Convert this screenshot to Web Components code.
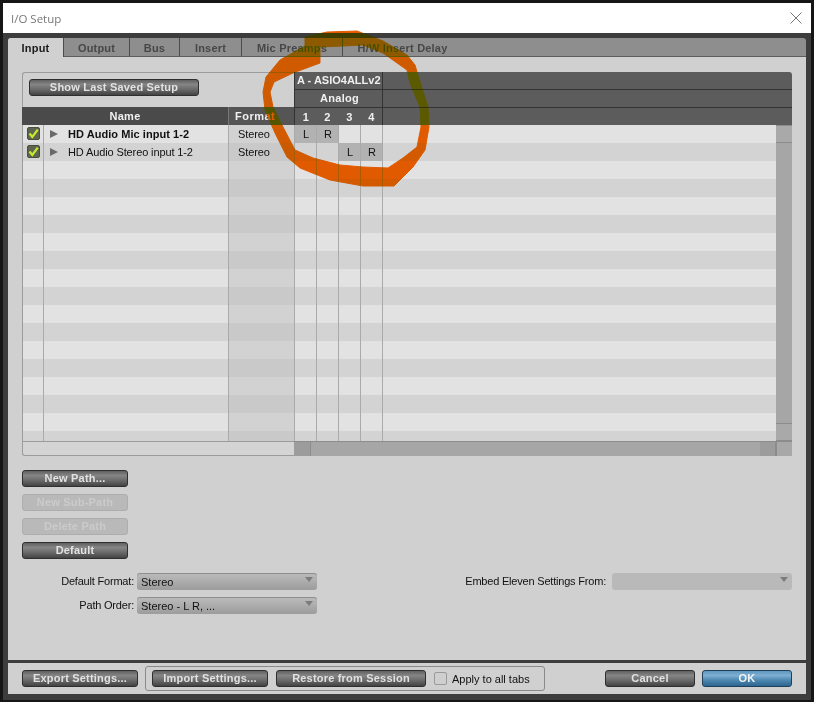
<!DOCTYPE html>
<html>
<head>
<meta charset="utf-8">
<title>I/O Setup</title>
<style>
  html, body { margin: 0; height: 100%; overflow: hidden; }
  body { background: #161616; padding: 3px 3px 2px 3px; box-sizing: border-box; font-family: "Liberation Sans", Arial, sans-serif; }
</style>
</head>
<body>
<io-window>
  <io-tabs slot="tabs"></io-tabs>
  <io-table></io-table>
  <div slot="buttons">
    <io-button wide>New Path...</io-button>
    <io-button wide disabled>New Sub-Path</io-button>
    <io-button wide disabled>Delete Path</io-button>
    <io-button wide>Default</io-button>
  </div>
  <io-settings slot="settings"></io-settings>
  <io-footer slot="footer"></io-footer>
</io-window>
<io-scribble></io-scribble>

<script>
class IoButton extends HTMLElement {
  constructor() {
    super();
    this.attachShadow({ mode: "open" });
    this.shadowRoot.innerHTML = `
      <style>
        :host {
          display: block;
          box-sizing: border-box;
          height: 17px;
          border: 1px solid #2f2f2f;
          border-radius: 3px;
          background: linear-gradient(#606060 0, #858585 30%, #6c6c6c 60%, #434343 100%);
          color: #e2e2e2;
          font: bold 11px/15px "Liberation Sans", Arial, sans-serif;
          letter-spacing: 0.2px;
          text-align: center;
          white-space: nowrap;
        }
        :host([wide]) { width: 106px; }
        :host([disabled]) {
          background: #b9b9b9;
          border-color: #adadad;
          color: #cbcbcb;
        }
        :host([primary]) {
          background: linear-gradient(#5f97bf 0, #7eafd2 30%, #4f89b2 60%, #2c6690 100%);
          border-color: #1f4058;
          color: #f0f4f7;
        }
      </style>
      <slot></slot>
    `;
  }
}

class IoCheck extends HTMLElement {
  constructor() {
    super();
    this.attachShadow({ mode: "open" });
    const checked = this.hasAttribute("checked");
    this.shadowRoot.innerHTML = `
      <style>
        :host {
          display: block;
          box-sizing: border-box;
          width: 13px;
          height: 13px;
          border-radius: 2px;
          border: 1px solid ${checked ? "#4a4f3c" : "#9a9a9a"};
          background: ${checked ? "#5e6450" : "#cfcfcf"};
        }
        svg { display: block; width: 11px; height: 11px; }
      </style>
      ${checked ? `<svg viewBox="0 0 11 11"><path d="M1.5 5.5 L4.3 9 L9.8 1.6" fill="none" stroke="#c4ec2c" stroke-width="2.2"/></svg>` : ""}
    `;
  }
}

class IoSelect extends HTMLElement {
  constructor() {
    super();
    this.attachShadow({ mode: "open" });
    this.shadowRoot.innerHTML = `
      <style>
        :host {
          display: flex;
          align-items: center;
          justify-content: space-between;
          box-sizing: border-box;
          width: 180px;
          height: 17px;
          padding: 0 4px;
          border-radius: 3px;
          background: linear-gradient(#bcbcbc, #9c9c9c);
          box-shadow: inset 0 1px 0 #8e8e8e;
          color: #111;
          font: 11px "Liberation Sans", Arial, sans-serif;
        }
        :host([disabled]) { background: #b9b9b9; box-shadow: none; }
        i {
          width: 0;
          height: 0;
          margin-bottom: 4px;
          border: 4px solid transparent;
          border-top: 5px solid #7c7c7c;
          border-bottom: 0;
        }
      </style>
      <span><slot></slot></span><i></i>
    `;
  }
}

class IoTabs extends HTMLElement {
  constructor() {
    super();
    this.attachShadow({ mode: "open" });
    const tabs = [["Input", 56], ["Output", 66], ["Bus", 50], ["Insert", 62], ["Mic Preamps", 101], ["H/W Insert Delay", 119]];
    const items = tabs
      .map(([name, width], index) => `<span class="${index === 0 ? "active" : ""}" style="width:${width}px">${name}</span>`)
      .join("");
    this.shadowRoot.innerHTML = `
      <style>
        :host {
          display: flex;
          box-sizing: border-box;
          height: 19px;
          background: #8e8e8e;
          border-radius: 3px 3px 0 0;
          border-bottom: 1px solid #5c5c5c;
          font: bold 11px/20px "Liberation Sans", Arial, sans-serif;
          letter-spacing: 0.2px;
          color: #474747;
        }
        span {
          box-sizing: border-box;
          text-align: center;
          border-right: 1px solid #4c4c4c;
          white-space: nowrap;
        }
        span:last-child { border-right: 0; }
        .active {
          background: #d0d0d0;
          color: #1a1a1a;
          height: 19px;
          border-radius: 3px 0 0 0;
        }
      </style>
      ${items}
    `;
  }
}

class IoTable extends HTMLElement {
  constructor() {
    super();
    this.attachShadow({ mode: "open" });
    const paths = [
      { name: "HD Audio Mic input 1-2", bold: true, cells: ["L", "R", "", ""] },
      { name: "HD Audio Stereo input 1-2", cells: ["", "", "L", "R"] }
    ];
    const rows = [];
    for (let i = 0; i < 18; i++) {
      const path = paths[i];
      const cells = [0, 1, 2, 3]
        .map((c) => {
          const text = path ? path.cells[c] : "";
          return `<div class="ch ${text ? "on" : ""}">${text}</div>`;
        })
        .join("");
      rows.push(`
        <div class="row ${i % 2 ? "odd" : ""}">
          <div class="check">${path ? "<io-check checked></io-check>" : ""}</div>
          <div class="name ${path && path.bold ? "bold" : ""}">${path ? `<b class="tri"></b>${path.name}` : ""}</div>
          <div class="format">${path ? "Stereo" : ""}</div>
          ${cells}
          <div class="rest"></div>
        </div>`);
    }
    this.shadowRoot.innerHTML = `
      <style>
        :host {
          display: grid;
          grid-template-rows: 35px 18px 316px 15px;
          grid-template-columns: 272px 1fr;
          height: 384px;
          font: 11px "Liberation Sans", Arial, sans-serif;
          color: #111;
        }
        .top {
          box-sizing: border-box;
          border: 1px solid #9c9c9c;
          border-bottom: 0;
          border-right: 0;
          border-radius: 3px 0 0 0;
          padding: 6px 0 0 6px;
        }
        .top io-button { width: 170px; }
        .bands {
          grid-column: 2;
          grid-row: 1 / 3;
          display: grid;
          grid-template-rows: 18px 18px 17px;
          background: #5c5c5c;
          border-radius: 0 3px 0 0;
          color: #f0f0f0;
          font-weight: bold;
          letter-spacing: 0.3px;
        }
        .band {
          display: grid;
          grid-template-columns: 88px 1fr;
          border-bottom: 1px solid #333;
          line-height: 17px;
          white-space: nowrap;
        }
        .band > div { border-left: 1px solid #333; }
        .band > div:first-child { padding-left: 2px; letter-spacing: 0; }
        .band.center > div:first-child { text-align: center; letter-spacing: 0.3px; }
        .nums { display: grid; grid-template-columns: repeat(4, 22px) 1fr; line-height: 19px; }
        .nums div { text-align: center; padding-left: 1px; }
        .nums div:first-child, .nums div:last-child { border-left: 1px solid #333; }
        .head {
          display: grid;
          grid-template-columns: 206px 66px;
          background: #4a4a4a;
          color: #f0f0f0;
          font-weight: bold;
          letter-spacing: 0.3px;
          line-height: 18px;
          text-align: center;
        }
        .head div:last-child { background: #555; border-left: 1px solid #777; text-align: left; padding-left: 6px; letter-spacing: 0.5px; }
        .body {
          grid-column: 1 / 3;
          display: grid;
          grid-template-columns: 1fr 16px;
          overflow: hidden;
        }
        .rows { overflow: hidden; height: 316px; letter-spacing: -0.12px; }
        .row {
          display: grid;
          grid-template-columns: 21px 185px 66px repeat(4, 22px) 1fr;
          height: 18px;
          background: #e2e2e2;
        }
        .row.odd { background: #d3d3d3; }
        .row > div { box-sizing: border-box; border-left: 1px solid #aaa; line-height: 18px; }
        .row > div:first-child { border-left: 1px solid #9c9c9c; }
        .check { padding: 2px 0 0 4px; }
        .name { display: flex; align-items: center; }
        .bold { font-weight: bold; letter-spacing: 0.05px; }
        .tri {
          width: 0;
          height: 0;
          margin: 0 10px 0 6px;
          border-left: 8px solid #6a6a6a;
          border-top: 4px solid transparent;
          border-bottom: 4px solid transparent;
        }
        .row .format { background: #d2d2d2; padding-left: 9px; }
        .row.odd .format { background: #c9c9c9; }
        .ch { text-align: center; padding-left: 1px; }
        .ch.on { background: #b2b2b2; }
        .vbar { display: grid; grid-template-rows: 18px 1fr 18px; background: #a6a6a6; }
        .vbar i { background: #a9a9a9; border-top: 1px solid #8c8c8c; border-bottom: 1px solid #8c8c8c; }
        .hleft {
          box-sizing: border-box;
          border: 1px solid #9c9c9c;
          border-right: 0;
          border-radius: 0 0 0 3px;
          background: #d4d4d4;
        }
        .hbar { display: grid; grid-template-columns: 17px 1fr 16px 16px; background: #a6a6a6; border-top: 1px solid #8c8c8c; }
        .hbar i { background: #9c9c9c; border-right: 1px solid #8c8c8c; }
        .hbar i:last-child { background: #a8a8a8; border-right: 0; border-left: 1px solid #8c8c8c; }
      </style>
      <div class="top"><io-button>Show Last Saved Setup</io-button></div>
      <div class="bands">
        <div class="band"><div>A - ASIO4ALLv2</div><div></div></div>
        <div class="band center"><div>Analog</div><div></div></div>
        <div class="nums"><div>1</div><div>2</div><div>3</div><div>4</div><div></div></div>
      </div>
      <div class="head"><div>Name</div><div>Format</div></div>
      <div class="body">
        <div class="rows">${rows.join("")}</div>
        <div class="vbar"><i></i><span></span><i></i></div>
      </div>
      <div class="hleft"></div>
      <div class="hbar"><i></i><span></span><i></i><i></i></div>
    `;
  }
}

class IoSettings extends HTMLElement {
  constructor() {
    super();
    this.attachShadow({ mode: "open" });
    this.shadowRoot.innerHTML = `
      <style>
        :host {
          display: flex;
          justify-content: space-between;
          align-items: flex-start;
          font: 11px/17px "Liberation Sans", Arial, sans-serif;
          color: #111;
        }
        .left {
          display: grid;
          grid-template-columns: 112px 180px;
          column-gap: 3px;
          row-gap: 7px;
          text-align: right;
        }
        .right { display: flex; gap: 6px; }
        span { letter-spacing: -0.2px; }
        io-select { text-align: left; }
      </style>
      <div class="left">
        <span>Default Format:</span><io-select>Stereo</io-select>
        <span>Path Order:</span><io-select>Stereo - L R, ...</io-select>
      </div>
      <div class="right">
        <span>Embed Eleven Settings From:</span><io-select disabled></io-select>
      </div>
    `;
  }
}

class IoFooter extends HTMLElement {
  constructor() {
    super();
    this.attachShadow({ mode: "open" });
    this.shadowRoot.innerHTML = `
      <style>
        :host {
          display: flex;
          align-items: center;
          box-sizing: border-box;
          height: 31px;
          padding: 0 14px;
          background: #d0d0d0;
          font: 11px "Liberation Sans", Arial, sans-serif;
          color: #111;
        }
        .export { width: 116px; }
        .group {
          display: flex;
          align-items: center;
          box-sizing: border-box;
          width: 400px;
          height: 25px;
          margin-left: 7px;
          padding: 0 6px;
          border: 1px solid #8a8a8a;
          border-radius: 3px;
        }
        .import { width: 116px; }
        .restore { width: 150px; margin-left: 8px; }
        io-check { margin: 0 5px 0 8px; }
        .end { margin-left: auto; display: flex; gap: 7px; }
        .cancel { width: 90px; }
        .ok { width: 90px; }
      </style>
      <io-button class="export">Export Settings...</io-button>
      <div class="group">
        <io-button class="import">Import Settings...</io-button>
        <io-button class="restore">Restore from Session</io-button>
        <io-check></io-check>
        <span>Apply to all tabs</span>
      </div>
      <div class="end">
        <io-button class="cancel">Cancel</io-button>
        <io-button class="ok" primary>OK</io-button>
      </div>
    `;
  }
}

class IoWindow extends HTMLElement {
  constructor() {
    super();
    this.attachShadow({ mode: "open" });
    this.shadowRoot.innerHTML = `
      <style>
        :host {
          display: flex;
          flex-direction: column;
          height: 697px;
          background: #3d3d3d;
        }
        .title {
          display: flex;
          align-items: center;
          justify-content: space-between;
          flex: none;
          height: 30px;
          padding: 0 9px 0 8px;
          background: #fff;
          color: #777;
          font: 11.5px "Open Sans", "Liberation Sans", sans-serif;
        }
        .title svg { display: block; width: 12px; height: 12px; }
        .inner {
          display: flex;
          flex-direction: column;
          flex: 1;
          padding: 5px 5px 6px;
        }
        .panel {
          height: 603px;
          box-sizing: border-box;
          padding: 15px 14px 0;
          background: #d0d0d0;
          display: flex;
          flex-direction: column;
        }
        ::slotted([slot="buttons"]) {
          display: flex;
          flex-direction: column;
          gap: 7px;
          margin-top: 14px;
        }
        ::slotted([slot="settings"]) { margin-top: 14px; }
        ::slotted([slot="footer"]) { margin-top: 3px; }
      </style>
      <div class="title">
        <span>I/O Setup</span>
        <svg viewBox="0 0 12 12"><path d="M0.5 0.5 L11.5 11.5 M11.5 0.5 L0.5 11.5" stroke="#777" stroke-width="1" fill="none"/></svg>
      </div>
      <div class="inner">
        <slot name="tabs"></slot>
        <div class="panel">
          <slot></slot>
          <slot name="buttons"></slot>
          <slot name="settings"></slot>
        </div>
        <slot name="footer"></slot>
      </div>
    `;
  }
}

// hand drawn circle on top of the dialog, blends to olive over the dark parts
class IoScribble extends HTMLElement {
  constructor() {
    super();
    this.attachShadow({ mode: "open" });
    this.shadowRoot.innerHTML = `
      <style>
        :host {
          position: absolute;
          left: 0;
          top: 0;
          width: 814px;
          height: 702px;
          pointer-events: none;
          mix-blend-mode: darken;
        }
        svg { display: block; }
      </style>
      <svg width="814" height="702" viewBox="0 0 814 702">
        <path fill="#e25a00" fill-rule="evenodd" stroke="#e25a00" stroke-width="1" stroke-linejoin="round"
          d="M305 37 L327 32 L357 31 L383 41 L407 55 L415 65 L420 82 L428 107 L429 127 L425 150 L413 167 L394 186 L363 186 L330 180 L300 168 L287 157 L275 133 L265 110 L263 92 L266 77 L280 60 L305 46 Z
             M320 63 L320 47 L343 46 L363 45 L383 53 L407 70 L410 83 L420 107 L421 127 L417 147 L403 158 L388 168 L363 167 L340 165 L313 158 L295 150 L283 127 L273 107 L270 92 L274 82 L293 73 Z"/>
      </svg>
    `;
  }
}

customElements.define("io-button", IoButton);
customElements.define("io-check", IoCheck);
customElements.define("io-select", IoSelect);
customElements.define("io-tabs", IoTabs);
customElements.define("io-table", IoTable);
customElements.define("io-settings", IoSettings);
customElements.define("io-footer", IoFooter);
customElements.define("io-window", IoWindow);
customElements.define("io-scribble", IoScribble);
</script>
</body>
</html>
